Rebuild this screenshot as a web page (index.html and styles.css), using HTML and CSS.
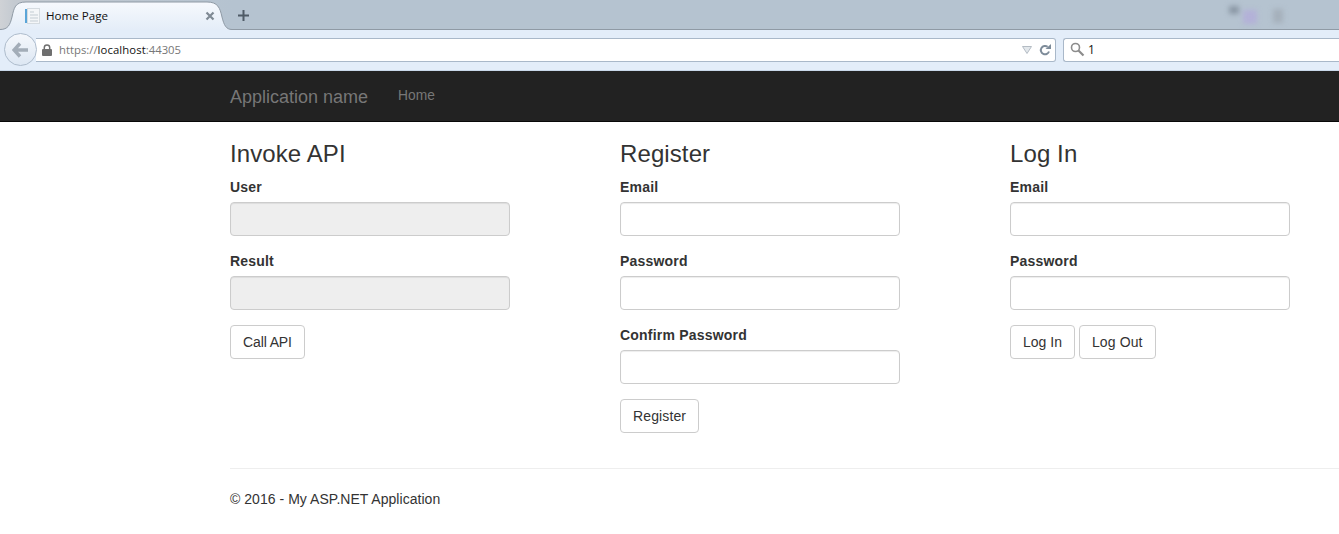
FILE: index.html
```html
<!DOCTYPE html>
<html lang="en">
<head>
    <meta charset="UTF-8">
    <title>Home Page</title>
    <link rel="stylesheet" href="styles.css">
</head>
<body>

    <!-- Browser chrome -->
    <div class="tab-strip">
        <div class="tab">
            <svg class="tab-shape" width="232" height="30" viewBox="0 0 232 30">
                <defs>
                    <linearGradient id="tabFill" x1="0" y1="0" x2="0" y2="1">
                        <stop offset="0" stop-color="#f6f9fd"/>
                        <stop offset="1" stop-color="#e4edf8"/>
                    </linearGradient>
                </defs>
                <path d="M0 29.5C8 29.5 10 25 12 17C14 8 15 2 26 2H207C218 2 220 8 222 17C224 25 226 29.5 232 29.5V30H0Z" fill="url(#tabFill)"/>
                <path d="M0 29.5C8 29.5 10 25 12 17C14 8 15 2 26 2H207C218 2 220 8 222 17C224 25 226 29.5 232 29.5" fill="none" stroke="#8f9aa5"/>
            </svg>
            <svg class="tab-icon" width="16" height="16" viewBox="0 0 16 16">
                <rect x="0" y="1" width="2" height="14" fill="#5aa5d8"/>
                <rect x="2.5" y="0.5" width="12" height="15" fill="#f4f6f8" stroke="#d5dbe0"/>
                <path d="M5 4h4M5 7h8M5 10h8M5 13h8" stroke="#c3ccd3"/>
            </svg>
            <span class="tab-title">Home Page</span>
            <svg class="tab-close" width="10" height="10" viewBox="0 0 10 10">
                <path d="M1.5 1.5l7 7M8.5 1.5l-7 7" stroke="#7f8a94" stroke-width="2.2"/>
            </svg>
        </div>
        <svg class="new-tab" width="11" height="11" viewBox="0 0 11 11">
            <path d="M5.5 0v11M0 5.5h11" stroke="#4f5b66" stroke-width="2"/>
        </svg>
        <div class="tray">
            <span class="tray-a"></span>
            <span class="tray-b"></span>
            <span class="tray-c"></span>
        </div>
    </div>

    <div class="toolbar">
        <div class="back-btn">
            <svg width="18" height="16" viewBox="0 0 18 16">
                <path d="M8 1.5L2 8l6 6.5M2.5 8H16" fill="none" stroke="#a3adb8" stroke-width="3.4"/>
            </svg>
        </div>
        <div class="url-box">
            <svg class="lock" width="10" height="12" viewBox="0 0 10 12">
                <path d="M2.3 5V3.6a2.7 2.7 0 0 1 5.4 0V5" fill="none" stroke="#6f6f6f" stroke-width="1.5"/>
                <rect x="0" y="5" width="10" height="7" rx="1" fill="#6f6f6f"/>
            </svg>
            <span class="url"><span class="url-dim">https://</span><span class="url-host">localhost</span><span class="url-dim">:44305</span></span>
            <svg class="url-arrow" width="10" height="8" viewBox="0 0 10 8">
                <path d="M0.5 0.5h9L5 7.5Z" fill="#e3e8ec" stroke="#b4bcc4"/>
            </svg>
            <svg class="reload" width="12" height="12" viewBox="0 0 12 12">
                <path d="M10 7.5A4.2 4.2 0 1 1 8.6 2.8" fill="none" stroke="#7d8b99" stroke-width="2"/>
                <path d="M6.5 5H12V0Z" fill="#7d8b99"/>
            </svg>
        </div>
        <div class="search-box">
            <svg width="15" height="15" viewBox="0 0 15 15">
                <circle cx="5.5" cy="5.5" r="4" fill="none" stroke="#8c8c8c" stroke-width="1.6"/>
                <path d="M8.5 8.5l5 5" stroke="#8c8c8c" stroke-width="2.2"/>
            </svg>
            <span class="search-text">1</span>
        </div>
    </div>

    <!-- Page -->
    <nav class="navbar">
        <a class="brand" href="#">Application name</a>
        <a class="nav-link" href="#">Home</a>
    </nav>

    <div class="content">
        <div class="columns">
            <div class="col">
                <h3>Invoke API</h3>
                <div class="form-group">
                    <label>User</label>
                    <input class="form-control" type="text" disabled>
                </div>
                <div class="form-group">
                    <label>Result</label>
                    <input class="form-control" type="text" disabled>
                </div>
                <button class="btn btn-narrow">Call API</button>
            </div>
            <div class="col">
                <h3>Register</h3>
                <div class="form-group">
                    <label>Email</label>
                    <input class="form-control" type="text">
                </div>
                <div class="form-group">
                    <label>Password</label>
                    <input class="form-control" type="password">
                </div>
                <div class="form-group">
                    <label>Confirm Password</label>
                    <input class="form-control" type="password">
                </div>
                <button class="btn btn-wide">Register</button>
            </div>
            <div class="col">
                <h3>Log In</h3>
                <div class="form-group">
                    <label>Email</label>
                    <input class="form-control" type="text">
                </div>
                <div class="form-group">
                    <label>Password</label>
                    <input class="form-control" type="password">
                </div>
                <div class="btn-row">
                    <button class="btn">Log In</button>
                    <button class="btn btn-wide">Log Out</button>
                </div>
            </div>
        </div>
        <hr>
        <footer>© 2016 - My ASP.NET Application</footer>
    </div>

</body>
</html>
```

FILE: styles.css
```css
* {
    box-sizing: border-box;
}

html, body {
    height: 100%;
    overflow: hidden;
}

body {
    margin: 0;
    font-family: "Liberation Sans", Arial, sans-serif;
    font-size: 14px;
    line-height: 20px;
    color: #333;
    background-color: #fff;
}

/* Browser chrome */
.tab-strip {
    height: 30px;
    display: flex;
    align-items: center;
    background: linear-gradient(90deg, #cfd2d6 0, #c4cad1 14px, #b5c3d0 232px);
    border-bottom: 1px solid #8f9aa5;
}

.tab {
    position: relative;
    width: 232px;
    height: 30px;
    flex-shrink: 0;
    display: flex;
    align-items: center;
    padding: 3px 0 0 25px;
}

.tab-shape {
    position: absolute;
    left: 0;
    top: 0;
}

.tab-icon,
.tab-title,
.tab-close {
    position: relative;
}

.tab-title {
    margin-left: 5px;
    font-family: "Open Sans", sans-serif;
    font-size: 11.6px;
    color: #111;
}

.tab-close {
    margin-left: auto;
    margin-right: 17px;
}

.new-tab {
    margin: 2px 0 0 6px;
}

.tray {
    margin-left: auto;
    margin-right: 56px;
    display: flex;
    align-items: center;
    gap: 4px;
    filter: blur(2.5px);
}

.tray-a {
    width: 10px;
    height: 8px;
    margin-bottom: 10px;
    background-color: #8b98a6;
}

.tray-b {
    width: 14px;
    height: 14px;
    margin-top: 4px;
    background-color: #b3b1d8;
}

.tray-c {
    width: 10px;
    height: 14px;
    margin: 2px 0 0 12px;
    background-color: #a5b0bb;
}

.toolbar {
    height: 41px;
    display: flex;
    align-items: center;
    padding: 0 0 1px 4px;
    background-color: #e3edf9;
    border-bottom: 1px solid #c9d8ea;
}

.back-btn {
    width: 33px;
    height: 33px;
    flex-shrink: 0;
    display: flex;
    align-items: center;
    justify-content: center;
    margin-right: -1px;
    background: linear-gradient(#f5f8fc, #dde7f3);
    border: 1px solid #aebccc;
    border-radius: 50%;
    position: relative;
}

.url-box {
    width: 1020px;
    height: 24px;
    flex-shrink: 0;
    display: flex;
    align-items: center;
    padding: 0 4px 0 6px;
    background-color: #fff;
    border: 1px solid #a9b8c9;
    border-left: none;
    border-radius: 0 3px 3px 0;
}

.url {
    margin-left: 7px;
    font-family: "Open Sans", sans-serif;
    font-size: 11.3px;
    color: #111;
}

.url-dim {
    color: #777;
}

.url-host {
    letter-spacing: 0.1px;
}

.url-arrow {
    margin-left: auto;
}

.reload {
    margin-left: 7px;
}

.search-box {
    flex: 1;
    height: 24px;
    display: flex;
    align-items: center;
    margin-left: 7px;
    padding-left: 6px;
    background-color: #fff;
    border: 1px solid #a9b8c9;
    border-right: none;
    border-radius: 3px 0 0 3px;
}

.search-text {
    margin-left: 3px;
    font-family: "Open Sans", sans-serif;
    font-size: 12px;
    color: #111;
}

/* Navbar */
.navbar {
    height: 51px;
    display: flex;
    align-items: center;
    padding: 0 0 1px 230px;
    background-color: #222;
    border-bottom: 1px solid #080808;
}

.brand {
    font-size: 18px;
    color: #777;
    text-decoration: none;
    padding-top: 2px;
}

.nav-link {
    margin-left: 30px;
    padding-top: 1px;
    color: #777;
    font-size: 13.8px;
    text-decoration: none;
}

/* Content */
.content {
    padding-left: 230px;
}

.columns {
    display: flex;
}

.col {
    width: 390px;
    flex-shrink: 0;
}

h3 {
    margin: 19px 0 10px;
    font-size: 24px;
    font-weight: 500;
    line-height: 26px;
    letter-spacing: 0.1px;
}

.form-group {
    margin-bottom: 15px;
}

label {
    display: block;
    margin-bottom: 5px;
    font-weight: 700;
    letter-spacing: 0.2px;
}

.form-control {
    display: block;
    width: 280px;
    height: 34px;
    padding: 6px 12px;
    font-family: inherit;
    font-size: 14px;
    color: #555;
    background-color: #fff;
    border: 1px solid #ccc;
    border-radius: 4px;
    box-shadow: inset 0 1px 1px rgba(0, 0, 0, 0.075);
}

.form-control[disabled] {
    background-color: #eee;
}

.btn {
    display: block;
    height: 34px;
    padding: 6px 12px;
    font-family: inherit;
    font-size: 14px;
    line-height: 20px;
    color: #333;
    background-color: #fff;
    border: 1px solid #ccc;
    border-radius: 4px;
}

.btn-wide {
    letter-spacing: 0.12px;
}

.btn-narrow {
    letter-spacing: -0.12px;
}

.btn-row {
    display: flex;
    gap: 4px;
}

hr {
    margin: 35px 0 20px;
    border: 0;
    border-top: 1px solid #eee;
}

footer {
    letter-spacing: 0.04px;
}
```
